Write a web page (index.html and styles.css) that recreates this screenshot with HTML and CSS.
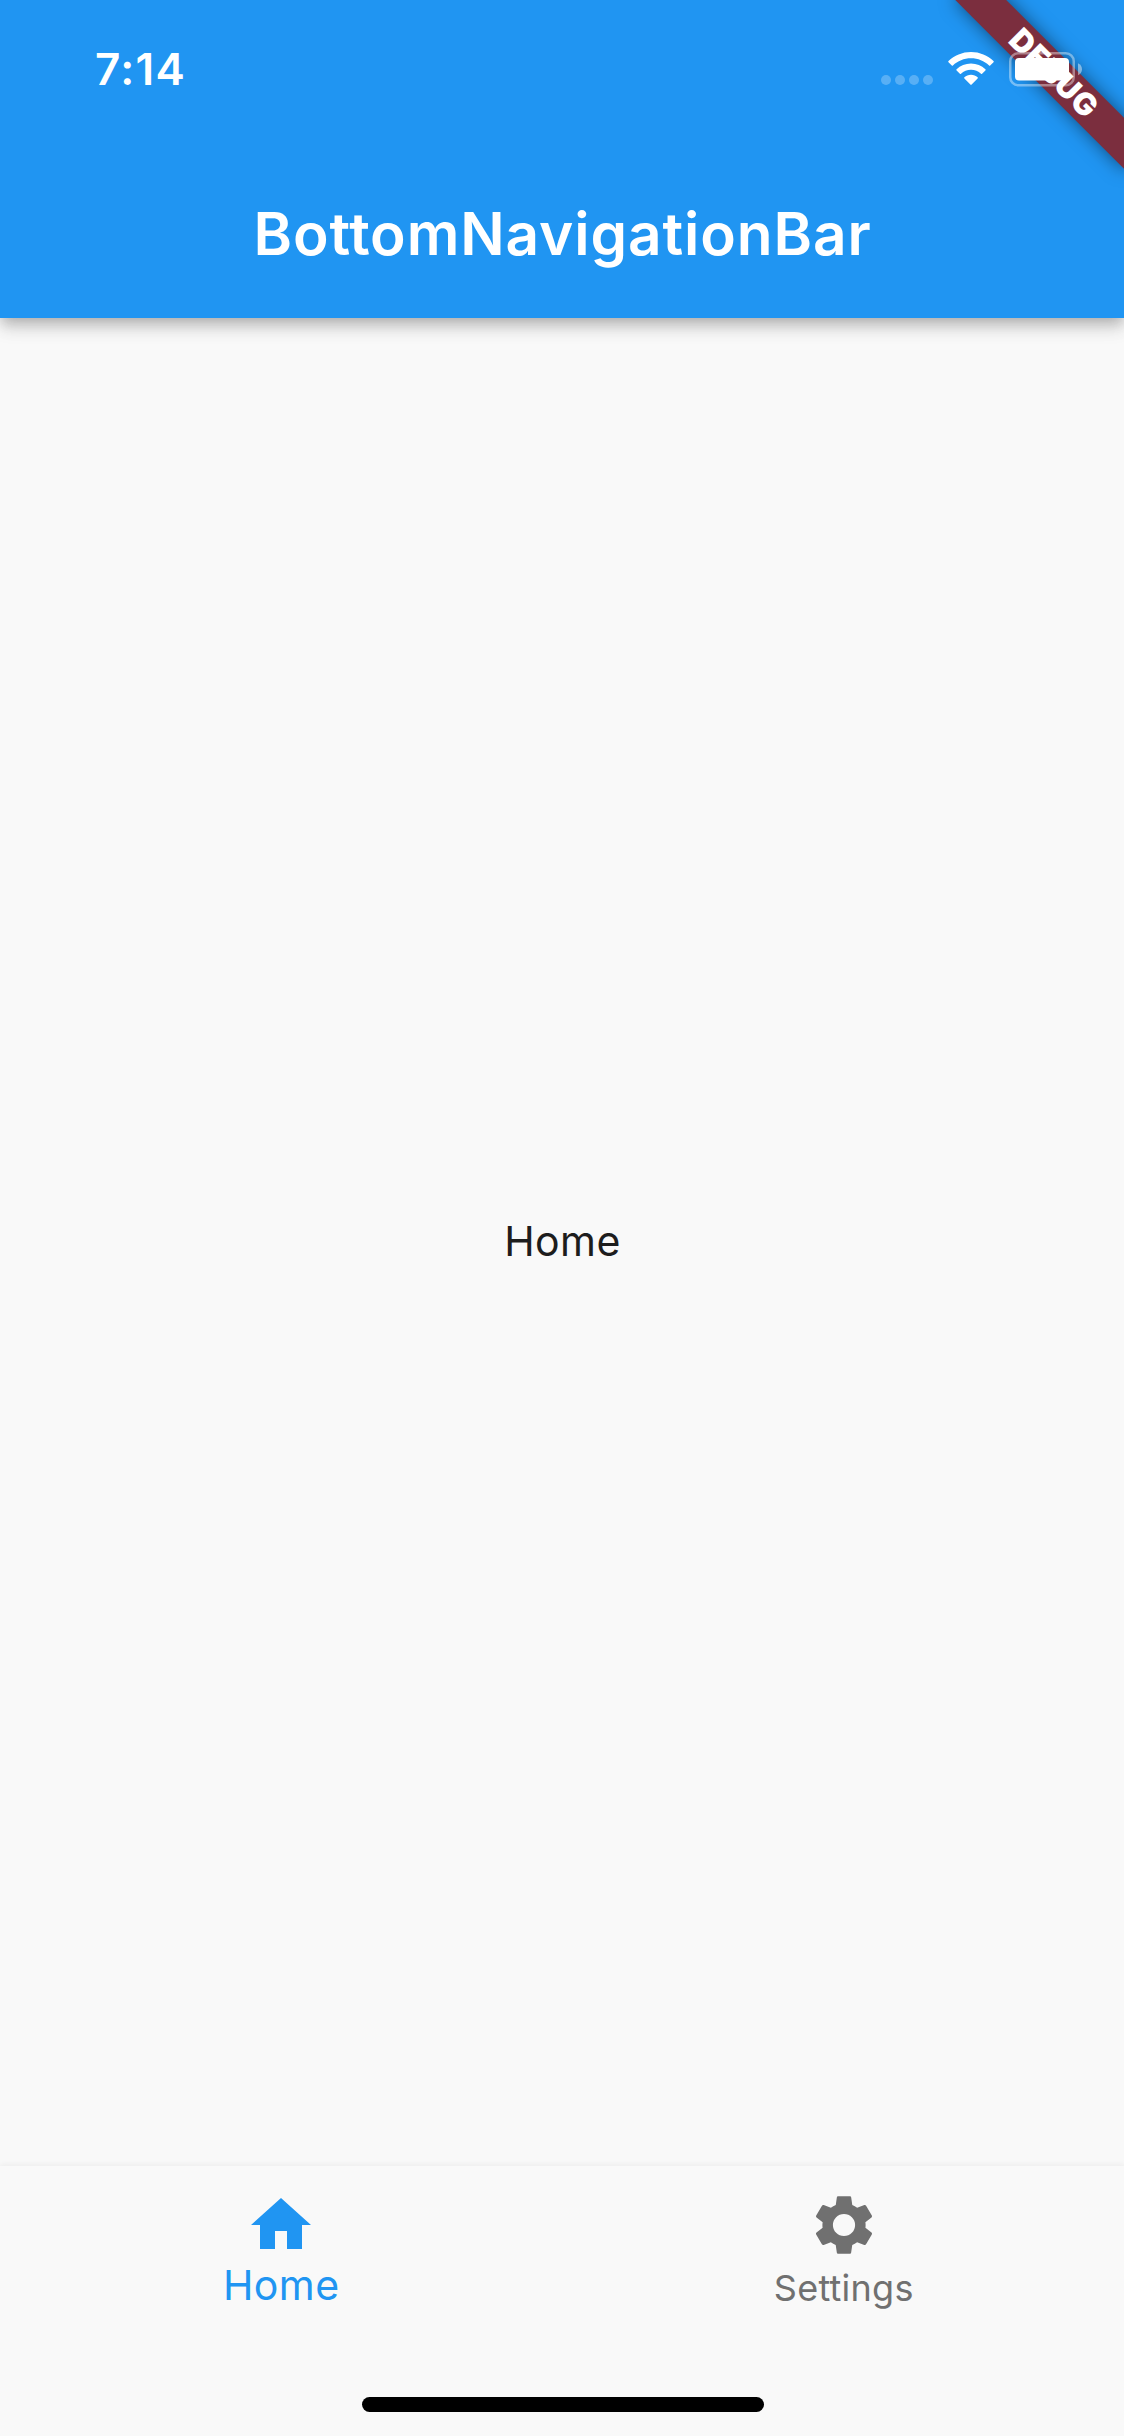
FILE: index.html
```html
<!DOCTYPE html>
<html lang="en">
<head>
<meta charset="utf-8">
<title>BottomNavigationBar</title>
<link rel="stylesheet" href="styles.css">
</head>
<body>
<div class="screen">
  <header class="app-bar">
    <div class="status-bar">
      <time class="clock">7:14</time>
      <div class="indicators">
        <div class="signal"><i></i><i></i><i></i><i></i></div>
        <svg class="wifi" viewBox="0 0 46 34" fill="#fff">
          <path d="M23 0C14.300 0 6.200 3.400 0.500 9.100a.8.8 0 0 0 0 1.100l3.300 3.300a.8.8 0 0 0 1.100 0C9.700 8.900 16 6.300 23 6.300s13.300 2.600 18.100 7.200a.8.8 0 0 0 1.100 0l3.300-3.300a.8.8 0 0 0 0-1.100C39.800 3.400 31.700 0 23 0z"/>
          <path d="M23 11.500c-5.600 0-10.600 2.200-14.400 5.700a.8.8 0 0 0 0 1.200l3.300 3.300a.8.8 0 0 0 1.100 0c2.700-2.400 6.100-3.900 10-3.900s7.300 1.500 10 3.900a.8.8 0 0 0 1.100 0l3.300-3.300a.8.8 0 0 0 0-1.200C33.600 13.700 28.600 11.500 23 11.500z"/>
          <path d="M23 22.700c-2.600 0-4.900 1-6.600 2.500a.8.8 0 0 0 0 1.200l6 6.200a.8.8 0 0 0 1.200 0l6-6.200a.8.8 0 0 0 0-1.200C27.900 23.700 25.600 22.700 23 22.700z"/>
        </svg>
        <svg class="battery" viewBox="0 0 74 35">
          <rect x="1.250" y="1.250" width="63.500" height="32" rx="8" fill="none" stroke="#fff" stroke-opacity=".4" stroke-width="2.500"/>
          <rect x="6" y="6" width="54" height="22.500" rx="4" fill="#fff"/>
          <path d="M69 11.300c2.300 1 4 3.300 4 6s-1.700 5-4 6z" fill="#fff" fill-opacity=".45"/>
        </svg>
      </div>
    </div>
    <h1 class="title">BottomNavigationBar</h1>
  </header>
  <main class="content"><p>Home</p></main>
  <nav class="bottom-nav">
    <div class="tabs">
      <a class="tab tab-active">
        <svg class="icon" viewBox="0 0 24 24"><path d="M10 20v-6h4v6h5v-8h3L12 3 2 12h3v8z"/></svg>
        <span class="label">Home</span>
      </a>
      <a class="tab">
        <svg class="icon" viewBox="0 0 24 24"><path d="M19.140 12.940c.04-.3.06-.61.06-.94 0-.32-.02-.64-.07-.94l2.030-1.580c.18-.14.23-.41.12-.61l-1.920-3.320c-.12-.22-.37-.29-.59-.22l-2.390.96c-.5-.38-1.030-.7-1.620-.94l-.36-2.540c-.04-.24-.24-.41-.48-.41h-3.840c-.24 0-.43.17-.47.41l-.36 2.540c-.59.24-1.130.57-1.620.94l-2.390-.96c-.22-.08-.47 0-.59.22L2.740 8.870c-.12.21-.08.47.12.61l2.030 1.580c-.05.3-.09.63-.09.94s.02.64.07.94l-2.030 1.580c-.18.14-.23.41-.12.61l1.920 3.320c.12.22.37.29.59.22l2.390-.96c.5.38 1.030.7 1.620.94l.36 2.540c.05.24.24.41.48.41h3.840c.24 0 .44-.17.47-.41l.36-2.540c.59-.24 1.130-.56 1.620-.94l2.390.96c.22.08.47 0 .59-.22l1.920-3.320c.12-.22.07-.47-.12-.61l-2.010-1.580zM12 15.700a3.700 3.700 0 1 1 0-7.400 3.700 3.700 0 0 1 0 7.400z"/></svg>
        <span class="label">Settings</span>
      </a>
    </div>
    <div class="home-indicator"></div>
  </nav>
  <div class="banner">DEBUG</div>
</div>
</body>
</html>
```
FILE: styles.css
```css
* { box-sizing: border-box; }

html { overflow: hidden; }

body {
  margin: 0;
  background: #f9f9f9;
  font-family: Inter, "Liberation Sans", sans-serif;
}

/* 375 × 812 points at 3x */
.screen {
  position: relative;
  display: flex;
  flex-direction: column;
  width: 1125px;
  height: 2436px;
  overflow: hidden;
}

.app-bar {
  display: flex;
  flex-direction: column;
  height: 318px;
  background: #2095f2;
  color: #fff;
  box-shadow: 0 6px 12px -3px rgba(0, 0, 0, .2), 0 12px 15px rgba(0, 0, 0, .1), 0 3px 24px rgba(0, 0, 0, .08);
}

.status-bar {
  display: flex;
  justify-content: space-between;
  align-items: flex-start;
  height: 150px;
  padding: 52px 42px 0 95px;
}

.clock {
  margin-top: 1px;
  font-size: 44px;
  line-height: 32px;
  font-weight: 600;
  letter-spacing: 1.3px;
}

/* Status icons stay above the debug ribbon. */
.indicators {
  position: relative;
  z-index: 2;
  display: flex;
}

.signal {
  display: flex;
  gap: 4px;
  margin: 23px 15px 0 0;
}

.signal i {
  width: 10px;
  height: 10px;
  border-radius: 50%;
  background: rgba(255, 255, 255, .25);
}

.wifi { width: 46px; height: 34px; margin-right: 15px; }
.battery { width: 74px; height: 35px; }

.title {
  margin: 0;
  font-size: 58.5px;
  line-height: 168px;
  font-weight: 600;
  letter-spacing: .9px;
  text-align: center;
}

.content {
  flex: 1;
  display: flex;
  align-items: center;
  justify-content: center;
  padding-bottom: 2px;
  color: #1d1d1d;
  font-size: 41px;
  font-weight: 400;
  letter-spacing: .4px;
}

.content p { margin: 0; line-height: 48px; }

.bottom-nav {
  display: flex;
  flex-direction: column;
  align-items: center;
  height: 270px;
  background: #f9f9f9;
  box-shadow: 0 -2px 6px rgba(0, 0, 0, .05);
}

.tabs { display: flex; width: 100%; height: 231px; }

.tab {
  flex: 1;
  display: flex;
  flex-direction: column;
  align-items: center;
  padding-top: 23px;
  color: #707070;
}

.icon { width: 72px; height: 72px; fill: currentColor; }

.label { font-size: 36px; line-height: 54px; letter-spacing: .25px; }

.tab-active { color: #2095f2; }
.tab-active .label { font-size: 41px; line-height: 48px; letter-spacing: .4px; }

.home-indicator {
  width: 402px;
  height: 15px;
  border-radius: 8px;
  background: #000;
}

/* Corner ribbon laid across the top right of the screen. */
.banner {
  position: absolute;
  z-index: 1;
  top: 84px;
  left: 1005px;
  width: 240px;
  height: 36px;
  padding-left: 3px;
  transform: rotate(45deg);
  transform-origin: 120px -84px;
  background: #7b2e3e;
  box-shadow: 0 0 18px rgba(0, 0, 0, .5);
  color: #fff;
  font-size: 31px;
  line-height: 36px;
  font-weight: 900;
  letter-spacing: .6px;
  text-align: center;
}
```
